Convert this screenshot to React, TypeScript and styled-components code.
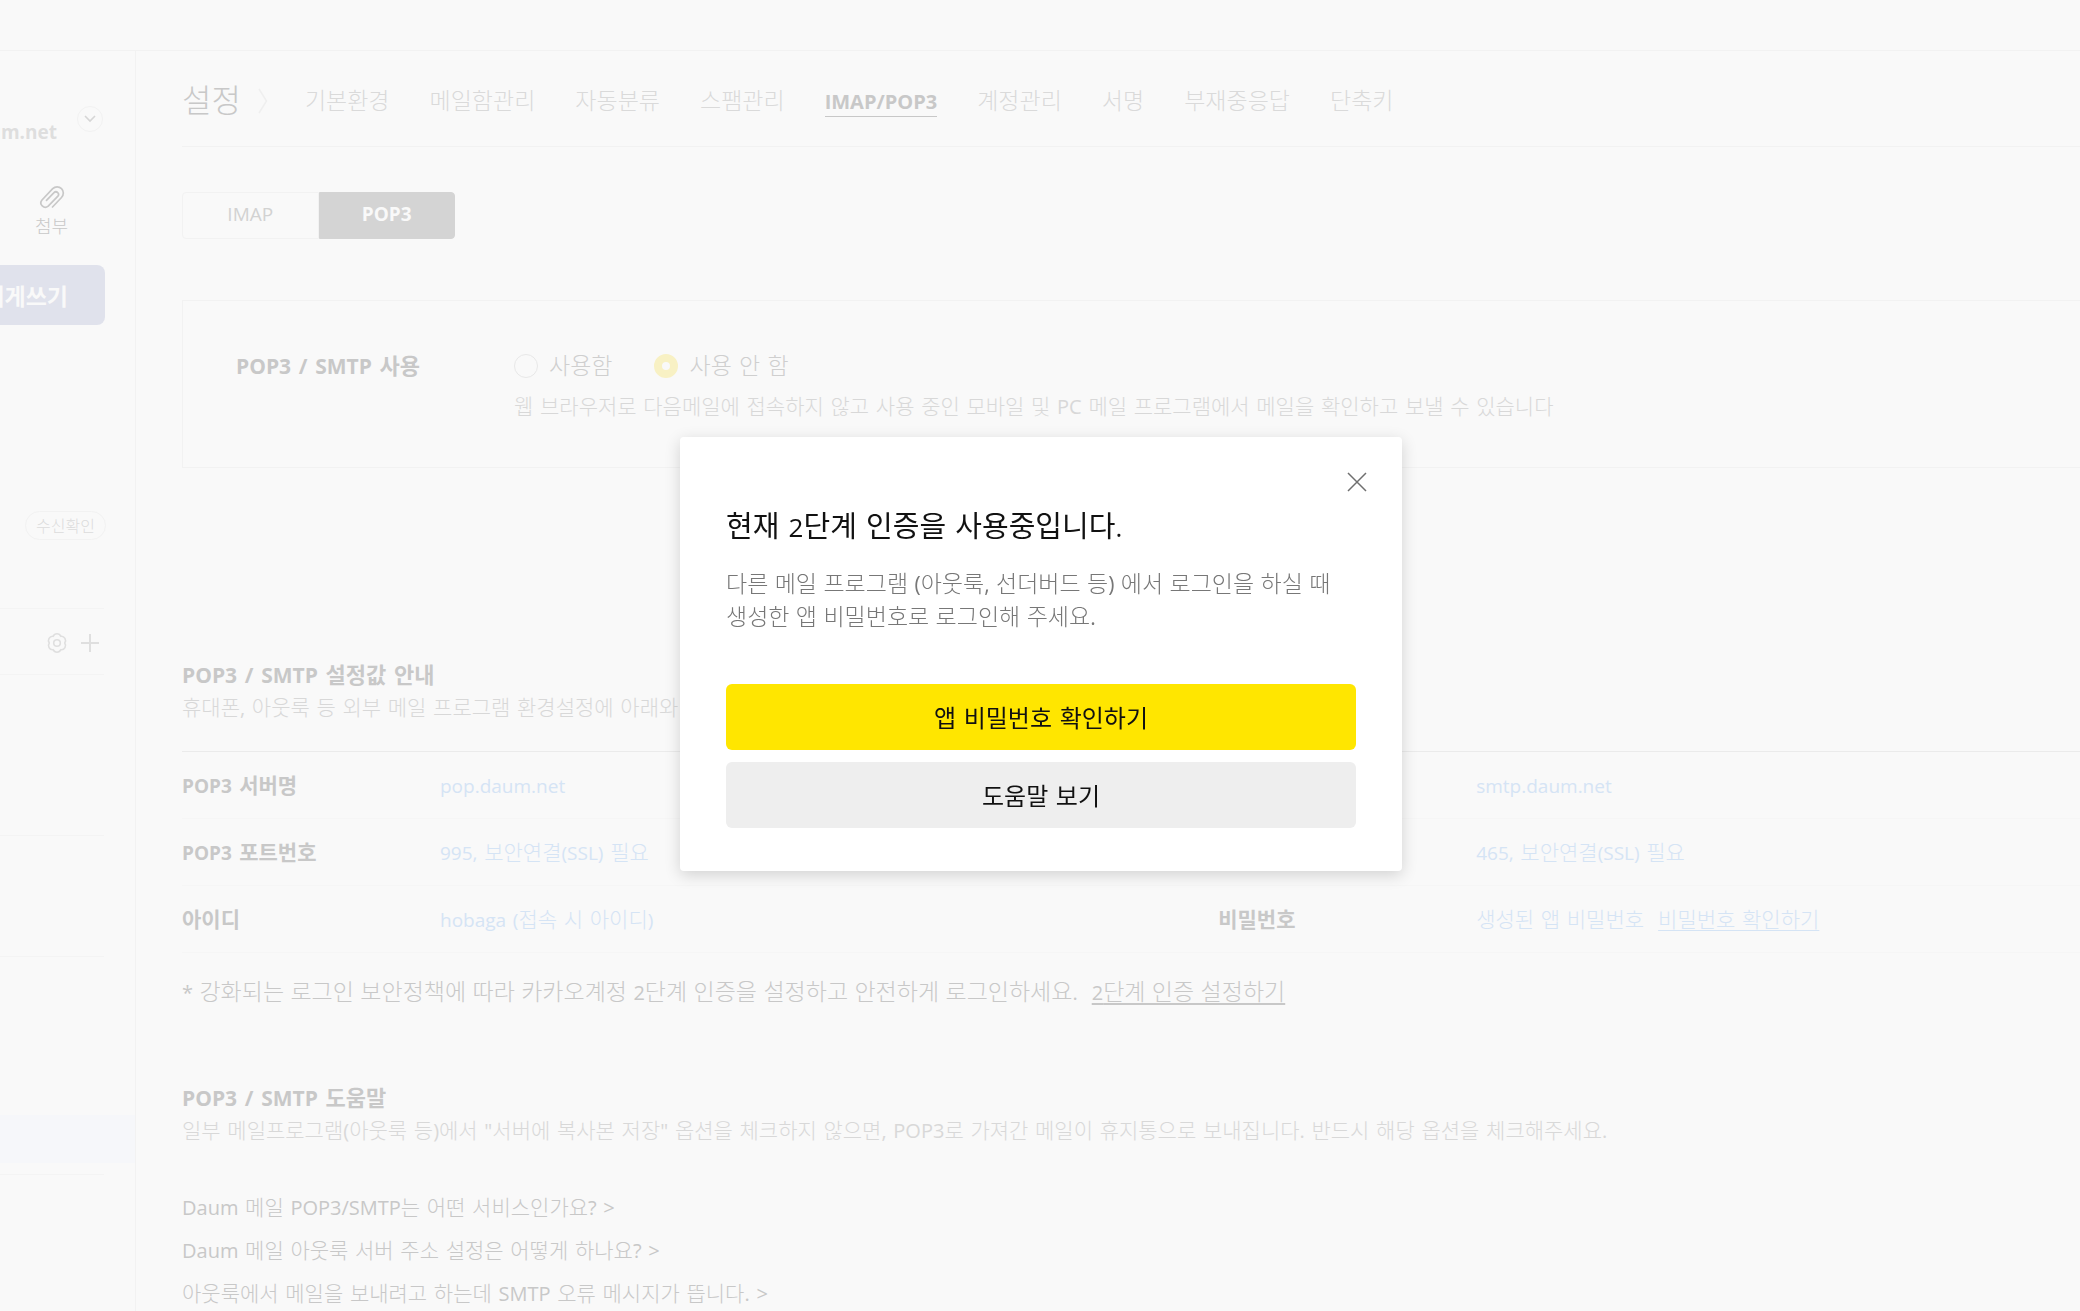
import React from "react";
import styled, { createGlobalStyle } from "styled-components";

const HANGUL = `"DejaVu Sans", "Noto Sans CJK KR", sans-serif`;
const HANGUL_TIGHT = `"Liberation Sans", "Noto Sans CJK KR", sans-serif`;
const LATIN = `"Open Sans", "Noto Sans CJK KR", sans-serif`;

const color = {
  page: "#f9f9f9",
  line: "#f2f2f2",
  faint: "#f6f6f6",
  strong: "#c8c8c8",
  text: "#cfcfcf",
  soft: "#d8d8d8",
  blue: "#d5e4f5",
};

const GlobalStyle = createGlobalStyle`
  *, *::before, *::after { box-sizing: border-box; }
  html, body { margin: 0; background: ${color.page}; }
  body { overflow: hidden; font-family: ${HANGUL}; font-weight: 300; color: ${color.text}; }
  h1, h2, p, ul { margin: 0; padding: 0; font-weight: inherit; }
  ul { list-style: none; }
  a { color: inherit; text-decoration: none; }
  button { font: inherit; color: inherit; border: 0; padding: 0; background: none; cursor: pointer; }
`;

const Latin = styled.span<{ $size: number; $bold?: boolean }>`
  font-family: ${LATIN};
  font-size: ${(p) => p.$size}px;
  font-weight: ${(p) => (p.$bold ? 700 : 400)};
  line-height: 0;
`;

function Mixed({ children, size = 19, bold }: { children: string; size?: number; bold?: boolean }) {
  return (
    <>
      {children.split(/([^\s\u3131-\uD79D]+)/).map((part, i) =>
        i % 2 ? (
          <Latin key={i} $size={size} $bold={bold}>
            {part}
          </Latin>
        ) : (
          part
        )
      )}
    </>
  );
}

const Page = styled.div`
  height: 100vh;
  display: flex;
  flex-direction: column;
  overflow: hidden;
`;

const TopBar = styled.header`
  flex: none;
  height: 51px;
  border-bottom: 1px solid ${color.line};
`;

const Body = styled.div`
  flex: 1;
  min-height: 0;
  display: flex;
`;

/* ---------- sidebar ---------- */

const Sidebar = styled.aside`
  flex: none;
  width: 136px;
  padding-top: 55px;
  border-right: 1px solid ${color.line};
  overflow: hidden;
`;

const Account = styled.div`
  display: flex;
  justify-content: flex-end;
  gap: 20px;
  padding-right: 32px;
`;

const Email = styled.span`
  padding-top: 13px;
  font: 700 19px/26px ${LATIN};
  color: #dedede;
`;

const RoundButton = styled.button`
  flex: none;
  width: 26px;
  height: 26px;
  display: grid;
  place-items: center;
  border: 1px solid ${color.line};
  border-radius: 50%;
`;

const AttachButton = styled.button`
  display: flex;
  flex-direction: column;
  align-items: center;
  gap: 6px;
  margin: 40px 0 0 35px;
  font-size: 18px;
  line-height: 24px;
  color: ${color.strong};
`;

const WriteButton = styled.button`
  width: 105px;
  height: 60px;
  margin-top: 26px;
  padding-right: 37px;
  display: flex;
  align-items: center;
  justify-content: flex-end;
  overflow: hidden;
  white-space: nowrap;
  border-radius: 0 8px 8px 0;
  background: #e0e2ec;
  color: ${color.page};
  font-size: 23px;
  font-weight: 700;
`;

const ReceiptButton = styled.button`
  display: block;
  height: 29px;
  margin: 186px 0 68px 25px;
  padding: 2px 10px 0;
  border: 1px solid ${color.line};
  border-radius: 15px;
  font-size: 16px;
  line-height: 25px;
  color: #dcdcdc;
`;

const Rule = styled.hr`
  height: 1px;
  margin: 0 31px 0 0;
  border: 0;
  background: #f4f4f4;
`;

const FolderTools = styled.div`
  height: 65px;
  display: flex;
  align-items: center;
  justify-content: flex-end;
  gap: 13px;
  padding: 2px 36px 0 0;
  color: #dfdfdf;

  button {
    display: flex;
  }
`;

const FolderGroup = styled.div<{ $height: number }>`
  height: ${(p) => p.$height}px;
`;

const ActiveFolder = styled.div`
  height: 48px;
  margin-bottom: 11px;
  background: #f6f7fa;
`;

/* ---------- main ---------- */

const Main = styled.main`
  flex: 1;
  min-width: 0;
  padding-left: 46px;
`;

const Header = styled.div`
  height: 96px;
  padding-top: 5px;
  display: flex;
  align-items: center;
  border-bottom: 1px solid ${color.line};
`;

const Title = styled.h1`
  font-size: 32px;
  line-height: 40px;
  color: ${color.strong};
`;

const Crumb = styled.svg`
  margin: 0 37px 0 17px;
`;

const Nav = styled.nav`
  display: flex;
  gap: 40px;
  font-size: 23px;
  line-height: 30px;
  color: #dadada;
`;

const NavLink = styled.a<{ $active?: boolean }>`
  height: 31px;
  border-bottom: 1px solid ${(p) => (p.$active ? color.strong : "transparent")};
  color: ${(p) => (p.$active ? color.strong : "inherit")};
  white-space: nowrap;
`;

const Tabs = styled.div`
  width: 273px;
  height: 47px;
  margin-top: 45px;
  display: grid;
  grid-template-columns: 1fr 1fr;
`;

const Tab = styled.button<{ $active?: boolean }>`
  border: 1px solid ${(p) => (p.$active ? "#d4d4d4" : color.line)};
  border-radius: ${(p) => (p.$active ? "0 4px 4px 0" : "4px 0 0 4px")};
  background: ${(p) => (p.$active ? "#d4d4d4" : "transparent")};
  color: ${(p) => (p.$active ? color.page : "#d2d2d2")};
`;

const UsageBox = styled.section`
  height: 168px;
  margin-top: 61px;
  padding: 49px 0 0 53px;
  display: flex;
  border: 1px solid ${color.line};
  border-right: 0;
`;

const UsageLabel = styled.h2`
  flex: none;
  width: 278px;
  font-size: 22px;
  font-weight: 700;
  line-height: 34px;
  color: ${color.strong};
`;

const RadioRow = styled.div`
  display: flex;
  gap: 42px;
`;

const RadioLabel = styled.label`
  display: flex;
  align-items: center;
  gap: 11px;
  font-size: 23px;
  line-height: 32px;
  color: ${color.text};
`;

const Radio = styled.input`
  appearance: none;
  width: 24px;
  height: 24px;
  margin: 0;
  border: 1px solid #e8e8e8;
  border-radius: 50%;

  &:checked {
    border: 8px solid #f8f1c4;
  }
`;

const Desc = styled.p`
  font-size: 21px;
  line-height: 32px;
  color: ${color.soft};
  white-space: nowrap;
`;

const UsageDesc = styled(Desc)`
  margin-top: 9px;
`;

const Section = styled.section<{ $top: number }>`
  margin-top: ${(p) => p.$top}px;
`;

const SectionTitle = styled.h2`
  font-size: 22px;
  font-weight: 700;
  line-height: 32px;
  color: ${color.strong};
`;

const SettingsTable = styled.table`
  width: 100%;
  margin-top: 27px;
  border-collapse: collapse;
  table-layout: fixed;
  border-top: 1px solid #ebebeb;
  font-size: 21px;
  line-height: 32px;
  text-align: left;

  tr {
    height: 67px;
    border-bottom: 1px solid ${color.faint};
  }

  th {
    padding: 2px 0 0;
    color: ${color.strong};
    font-weight: 700;
  }

  td {
    padding: 2px 0 0;
    color: ${color.blue};
    white-space: nowrap;
  }
`;

const LabelCol = styled.col`
  width: 258px;
`;

const ValueCol = styled.col`
  width: 41%;
`;

const InlineLink = styled.a`
  margin-left: 14px;
  text-decoration: underline;
  text-decoration-thickness: 1px;
  text-underline-offset: 3px;
`;

const Note = styled.p`
  margin-top: 23px;
  font-family: ${HANGUL_TIGHT};
  font-size: 23px;
  line-height: 32px;
  color: ${color.strong};
  white-space: nowrap;

  ${InlineLink} {
    text-decoration-thickness: 2px;
  }
`;

const Faq = styled.ul`
  margin-top: 40px;
  font-size: 21px;
  line-height: 43px;
  color: ${color.strong};
`;

/* ---------- modal ---------- */

const Overlay = styled.div`
  position: fixed;
  inset: 0;
  padding: 0 0 3px 2px;
  display: flex;
  align-items: center;
  justify-content: center;
`;

const Modal = styled.div`
  position: relative;
  width: 722px;
  padding: 70px 46px 43px;
  border-radius: 4px;
  background: #fff;
  box-shadow: 0 4px 16px rgba(0, 0, 0, 0.16);
`;

const CloseButton = styled.button`
  position: absolute;
  top: 30px;
  right: 30px;
  width: 30px;
  height: 30px;
  display: grid;
  place-items: center;
`;

const ModalTitle = styled.h2`
  font-size: 29px;
  font-weight: 400;
  line-height: 40px;
  color: #111;
`;

const ModalText = styled.p`
  margin: 21px 0 50px;
  font-family: ${HANGUL_TIGHT};
  font-size: 23px;
  line-height: 33px;
  color: #777;
`;

const ModalButton = styled.button<{ $primary?: boolean }>`
  display: block;
  width: 100%;
  height: 66px;
  padding-bottom: 2px;
  border-radius: 6px;
  background: ${(p) => (p.$primary ? "#ffe600" : "#eee")};
  color: #111;
  font-size: 24px;
  font-weight: 400;

  & + & {
    margin-top: 12px;
  }
`;

const NAV = ["기본환경", "메일함관리", "자동분류", "스팸관리", "IMAP/POP3", "계정관리", "서명", "부재중응답", "단축키"];

const ROWS = [
  ["POP3 서버명", "pop.daum.net", "SMTP 서버명", "smtp.daum.net"],
  ["POP3 포트번호", "995, 보안연결(SSL) 필요", "SMTP 포트번호", "465, 보안연결(SSL) 필요"],
  ["아이디", "hobaga (접속 시 아이디)", "비밀번호", "생성된 앱 비밀번호"],
];

const FAQ = [
  "Daum 메일 POP3/SMTP는 어떤 서비스인가요? >",
  "Daum 메일 아웃룩 서버 주소 설정은 어떻게 하나요? >",
  "아웃룩에서 메일을 보내려고 하는데 SMTP 오류 메시지가 뜹니다. >",
];

export default function App() {
  return (
    <>
      <GlobalStyle />
      <Page>
        <TopBar />
        <Body>
          <Sidebar>
            <Account>
              <Email>hobaga@daum.net</Email>
              <RoundButton aria-label="계정 목록">
                <svg width="12" height="8" viewBox="0 0 12 8" fill="none" stroke="#d6d6d6" strokeWidth="1.6">
                  <path d="M1 1l5 5 5-5" />
                </svg>
              </RoundButton>
            </Account>
            <AttachButton>
              <svg width="26" height="24" viewBox="0 0 26 24" fill="none" stroke="currentColor" strokeWidth="1.7" strokeLinecap="round">
                <path d="M13.5 22L22.5 12.5A6.2 6.2 0 0 0 13.7 3.7L3 15A4.4 4.4 0 0 0 9.2 21.2L18.7 11.4A2.6 2.6 0 0 0 15 7.7L7.5 15.3" />
              </svg>
              첨부
            </AttachButton>
            <WriteButton>내게쓰기</WriteButton>
            <ReceiptButton>수신확인</ReceiptButton>
            <Rule />
            <FolderTools>
              <button aria-label="메일함 설정">
                <svg width="22" height="22" viewBox="0 0 22 22" fill="none" stroke="currentColor" strokeWidth="1.6" strokeLinejoin="round">
                  <path d="M7.15 4.33A4.2 4.2 0 0 1 14.85 4.33A4.2 4.2 0 0 1 18.7 11A4.2 4.2 0 0 1 14.85 17.67A4.2 4.2 0 0 1 7.15 17.67A4.2 4.2 0 0 1 3.3 11A4.2 4.2 0 0 1 7.15 4.33Z" />
                  <circle cx="11" cy="11" r="3.3" />
                </svg>
              </button>
              <button aria-label="메일함 추가">
                <svg width="18" height="18" viewBox="0 0 18 18" stroke="currentColor" strokeWidth="2">
                  <path d="M9 0v18M0 9h18" />
                </svg>
              </button>
            </FolderTools>
            <Rule />
            <FolderGroup $height={160} />
            <Rule />
            <FolderGroup $height={120} />
            <Rule />
            <FolderGroup $height={158} />
            <ActiveFolder />
            <Rule />
          </Sidebar>

          <Main>
            <Header>
              <Title>설정</Title>
              <Crumb width="10" height="26" viewBox="0 0 10 26" fill="none" stroke="#efefef" strokeWidth="1.5">
                <path d="M1 1l7.5 12L1 25" />
              </Crumb>
              <Nav>
                {NAV.map((name) => (
                  <NavLink key={name} href="#" $active={name === "IMAP/POP3"}>
                    <Mixed bold size={20}>
                      {name}
                    </Mixed>
                  </NavLink>
                ))}
              </Nav>
            </Header>

            <Tabs>
              <Tab>
                <Mixed>IMAP</Mixed>
              </Tab>
              <Tab $active>
                <Mixed bold>POP3</Mixed>
              </Tab>
            </Tabs>

            <UsageBox>
              <UsageLabel>
                <Mixed bold size={21}>
                  POP3 / SMTP 사용
                </Mixed>
              </UsageLabel>
              <div>
                <RadioRow>
                  <RadioLabel>
                    <Radio type="radio" name="pop3" />
                    사용함
                  </RadioLabel>
                  <RadioLabel>
                    <Radio type="radio" name="pop3" defaultChecked />
                    사용 안 함
                  </RadioLabel>
                </RadioRow>
                <UsageDesc>
                  <Mixed size={20}>
                    웹 브라우저로 다음메일에 접속하지 않고 사용 중인 모바일 및 PC 메일 프로그램에서 메일을 확인하고 보낼 수 있습니다
                  </Mixed>
                </UsageDesc>
              </div>
            </UsageBox>

            <Section $top={192}>
              <SectionTitle>
                <Mixed bold size={21}>
                  POP3 / SMTP 설정값 안내
                </Mixed>
              </SectionTitle>
              <Desc>
                <Mixed size={20}>휴대폰, 아웃룩 등 외부 메일 프로그램 환경설정에 아래와 같이 입력해 주세요.</Mixed>
              </Desc>
              <SettingsTable>
                <colgroup>
                  <LabelCol />
                  <ValueCol />
                  <LabelCol />
                  <col />
                </colgroup>
                <tbody>
                  {ROWS.map(([label, value, label2, value2]) => (
                    <tr key={label}>
                      <th scope="row">
                        <Mixed bold>{label}</Mixed>
                      </th>
                      <td>
                        <Mixed>{value}</Mixed>
                      </td>
                      <th scope="row">
                        <Mixed bold>{label2}</Mixed>
                      </th>
                      <td>
                        <Mixed>{value2}</Mixed>
                        {label2 === "비밀번호" && <InlineLink href="#">비밀번호 확인하기</InlineLink>}
                      </td>
                    </tr>
                  ))}
                </tbody>
              </SettingsTable>
              <Note>
                <Mixed size={20}>* 강화되는 로그인 보안정책에 따라 카카오계정 2단계 인증을 설정하고 안전하게 로그인하세요.</Mixed>
                <InlineLink href="#">
                  <Mixed size={20}>2단계 인증 설정하기</Mixed>
                </InlineLink>
              </Note>
            </Section>

            <Section $top={75}>
              <SectionTitle>
                <Mixed bold size={21}>
                  POP3 / SMTP 도움말
                </Mixed>
              </SectionTitle>
              <Desc>
                <Mixed size={20}>
                  일부 메일프로그램(아웃룩 등)에서 "서버에 복사본 저장" 옵션을 체크하지 않으면, POP3로 가져간 메일이 휴지통으로 보내집니다. 반드시 해당 옵션을 체크해주세요.
                </Mixed>
              </Desc>
              <Faq>
                {FAQ.map((question) => (
                  <li key={question}>
                    <a href="#">
                      <Mixed size={20}>{question}</Mixed>
                    </a>
                  </li>
                ))}
              </Faq>
            </Section>
          </Main>
        </Body>
      </Page>

      <Overlay>
        <Modal role="dialog" aria-modal="true" aria-labelledby="modal-title">
          <CloseButton aria-label="닫기">
            <svg width="20" height="20" viewBox="0 0 20 20" stroke="#6f6f6f" strokeWidth="1.5">
              <path d="M1 1l18 18M19 1L1 19" />
            </svg>
          </CloseButton>
          <ModalTitle id="modal-title">
            <Mixed size={26}>현재 2단계 인증을 사용중입니다.</Mixed>
          </ModalTitle>
          <ModalText>
            <Mixed size={21}>다른 메일 프로그램 (아웃룩, 선더버드 등) 에서 로그인을 하실 때</Mixed>
            <br />
            <Mixed size={21}>생성한 앱 비밀번호로 로그인해 주세요.</Mixed>
          </ModalText>
          <ModalButton $primary>앱 비밀번호 확인하기</ModalButton>
          <ModalButton>도움말 보기</ModalButton>
        </Modal>
      </Overlay>
    </>
  );
}
